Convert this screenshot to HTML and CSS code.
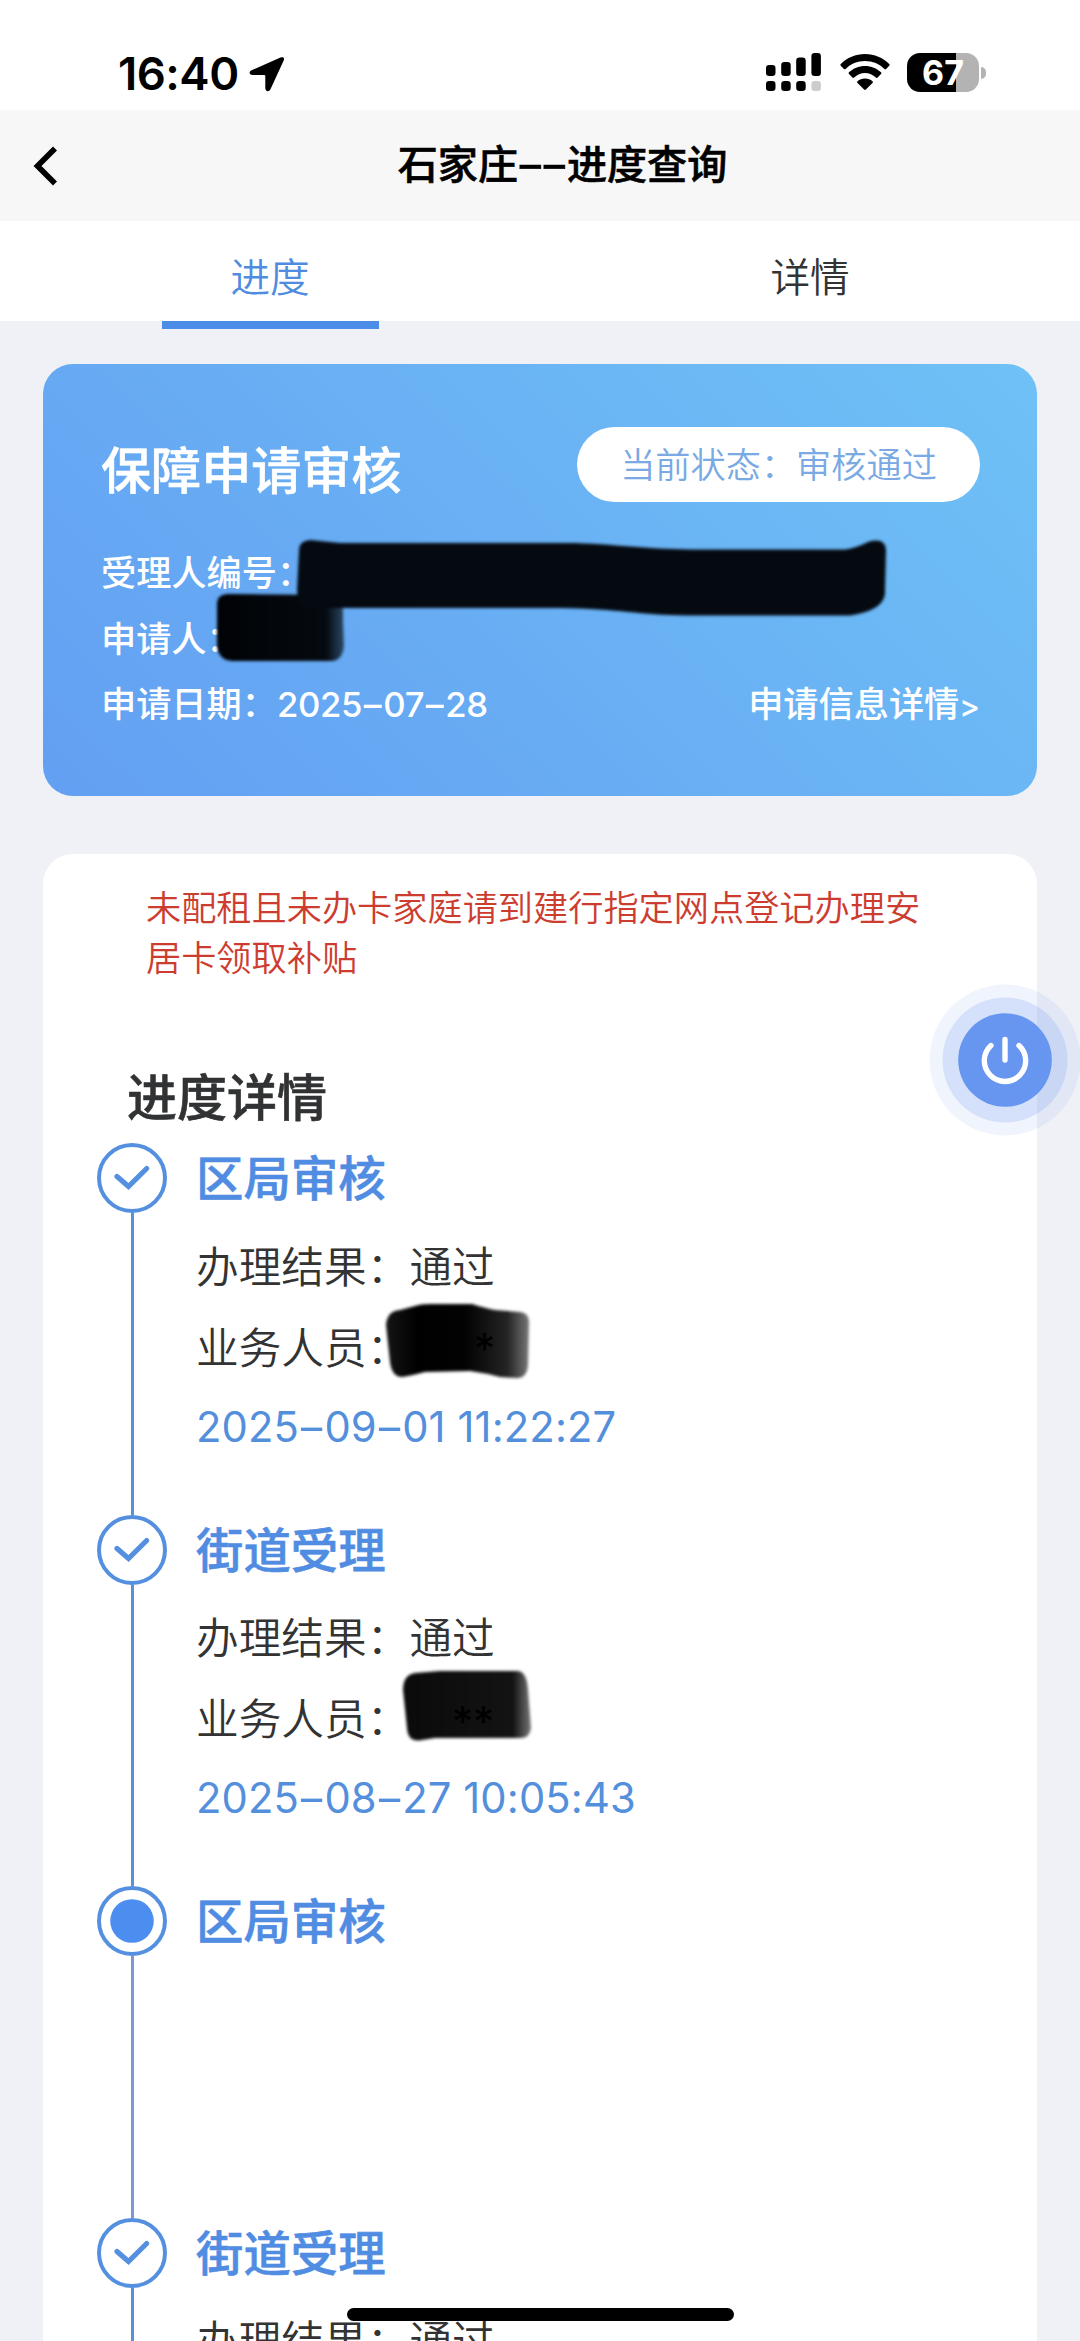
FILE: index.html
```html
<!DOCTYPE html>
<html lang="zh-CN">
<head>
<meta charset="utf-8">
<title>石家庄--进度查询</title>
<link rel="stylesheet" href="styles.css">
</head>
<body>
<div class="screen">
  <header class="status">
    <div class="status-left">
      <span class="time">16:40</span>
      <svg class="location" width="36" height="36" viewBox="0 0 36 36"><path d="M31.500 1.600 2.600 14.200C-.5 15.800 0 18.900 3.600 19H15.200Q16.300 19 16.300 20V32.200C16.600 36 20 36.200 21.600 33L34.800 4.200C35.800 1.600 34 .4 31.500 1.600Z"/></svg>
    </div>
    <div class="status-right">
      <svg width="56" height="38" viewBox="0 0 56 38">
        <rect x="0" y="12" width="9.500" height="11" rx="3.200"/><rect x="15.200" y="9" width="9.500" height="14" rx="3.200"/><rect x="30.200" y="4.500" width="9.500" height="18.500" rx="3.200"/><rect x="45.400" y="0" width="9.500" height="23" rx="3.200"/>
        <rect x="0" y="28" width="9.500" height="10" rx="3.200"/><rect x="15.200" y="28" width="9.500" height="10" rx="3.200"/><rect x="30.200" y="28" width="9.500" height="10" rx="3.200"/><rect x="45.400" y="28" width="9.500" height="10" rx="3.200" fill="#ccc"/>
      </svg>
      <svg class="wifi" width="50" height="38" viewBox="0 0 50 38"><path d="M25 1C15.500 1 7 4.800.8 11c-.6.600-.6 1.200 0 1.800l3.100 3.100c.5.500 1.100.5 1.700 0C10.600 11 17.400 8 25 8s14.400 3 19.400 7.900c.6.500 1.200.5 1.700 0l3.100-3.100c.6-.6.600-1.200 0-1.800C43 4.800 34.500 1 25 1Z"/><path d="M25 13c-6.200 0-11.800 2.400-16 6.300-.6.600-.6 1.200 0 1.800l3.400 3.400c.5.500 1.100.5 1.700 0C17 21.800 20.800 20 25 20s8 1.800 10.900 4.500c.6.500 1.200.5 1.700 0L41 21.100c.6-.6.600-1.200 0-1.800C36.800 15.400 31.200 13 25 13Z"/><path d="M25 25.400c-2.900 0-5.500 1-7.500 2.800-.6.500-.6 1.100 0 1.700l6.600 6.700c.6.600 1.200.6 1.800 0l6.600-6.700c.6-.6.600-1.200 0-1.700-2-1.800-4.600-2.800-7.500-2.800Z"/></svg>
      <div class="battery"><div class="battery-body">67</div><div class="battery-tip"></div></div>
    </div>
  </header>

  <nav class="nav">
    <svg class="back" width="26" height="40" viewBox="0 0 26 40"><path d="M23 2.500 5.500 20 23 37.500" fill="none" stroke="#000" stroke-width="5.600"/></svg>
    <h1 class="nav-title">石家庄<span class="dash">-</span><span class="dash">-</span>进度查询</h1>
  </nav>

  <div class="tabs">
    <div class="tab tab-active">进度</div>
    <div class="tab">详情</div>
  </div>

  <main class="content">
    <section class="card">
      <div class="card-head">
        <h2 class="card-title">保障申请审核</h2>
        <div class="pill">当前状态：审核通过</div>
      </div>
      <div class="row">受理人编号：</div>
      <div class="row">申请人：</div>
      <div class="row">
        <span>申请日期：<span class="num">2025<span class="dash">-</span>07<span class="dash">-</span>28</span></span>
        <span class="more">申请信息详情<span class="gt">&gt;</span></span>
      </div>
    </section>

    <section class="panel">
      <p class="notice">未配租且未办卡家庭请到建行指定网点登记办理安居卡领取补贴</p>
      <h2 class="panel-title">进度详情</h2>
      <ol class="steps">
        <li class="step">
          <div class="rail">
            <svg width="70" height="70" viewBox="0 0 70 70"><circle class="ring" cx="35" cy="35" r="33"/><path class="tick" d="m20 33.500 11.500 10L49.700 25.500"/></svg>
            <div class="line"></div>
          </div>
          <div class="body">
            <h3>区局审核</h3>
            <p>办理结果：通过</p>
            <p>业务人员：</p>
            <time>2025<span class="dash">-</span>09<span class="dash">-</span>01 11:22:27</time>
          </div>
        </li>
        <li class="step">
          <div class="rail">
            <svg width="70" height="70" viewBox="0 0 70 70"><circle class="ring" cx="35" cy="35" r="33"/><path class="tick" d="m20 33.500 11.500 10L49.700 25.500"/></svg>
            <div class="line"></div>
          </div>
          <div class="body">
            <h3>街道受理</h3>
            <p>办理结果：通过</p>
            <p>业务人员：</p>
            <time>2025<span class="dash">-</span>08<span class="dash">-</span>27 10:05:43</time>
          </div>
        </li>
        <li class="step step-current">
          <div class="rail">
            <svg width="70" height="70" viewBox="0 0 70 70"><circle class="ring" cx="35" cy="35" r="33"/><circle class="dot" cx="35" cy="35" r="21.800"/></svg>
            <div class="line"></div>
          </div>
          <div class="body"><h3>区局审核</h3></div>
        </li>
        <li class="step">
          <div class="rail">
            <svg width="70" height="70" viewBox="0 0 70 70"><circle class="ring" cx="35" cy="35" r="33"/><path class="tick" d="m20 33.500 11.500 10L49.700 25.500"/></svg>
            <div class="line"></div>
          </div>
          <div class="body">
            <h3>街道受理</h3>
            <p>办理结果：通过</p>
          </div>
        </li>
      </ol>
    </section>
  </main>

  <svg class="marks" width="1080" height="2341" viewBox="0 0 1080 2341">
    <defs>
      <linearGradient id="fadeA"><stop offset="0" stop-color="#151515"/><stop offset=".22" stop-color="#000"/><stop offset=".55" stop-color="#020202"/><stop offset=".85" stop-color="#242424"/><stop offset="1" stop-color="#777"/></linearGradient>
      <linearGradient id="fadeB"><stop offset="0" stop-color="#0a0a0a"/><stop offset=".86" stop-color="#131313"/><stop offset="1" stop-color="#777"/></linearGradient>
      <linearGradient id="fadeC"><stop offset="0" stop-color="#000205"/><stop offset=".86" stop-color="#050a10"/><stop offset="1" stop-color="#2a4866"/></linearGradient>
    </defs>
    <path fill="url(#fadeC)" d="M217 603Q217 595 227 594L335 595Q344 597 343 620L344 645Q343 660 332 661L232 661Q218 660 217 645Z"/>
    <path fill="#050a11" d="M299 550Q299 541 310 540L340 543 575 543C625 545 650 549.500 700 549.500L845 549.500Q856 548 868 542 885 537 886 550L885 590Q887 610 850 615.500L685 615.500C640 615 620 609 560 608L345 608Q318 608 305 606 297 602 297 590Z"/>
    <path fill="url(#fadeA)" d="M386 1325Q387 1311 400 1310L415 1306Q420 1304 430 1304L472 1304Q485 1308 495 1310L520 1312Q529 1313 529 1322L528 1365Q527 1378 517 1378L500 1377Q485 1373 470 1371L425 1372Q410 1376 402 1377 392 1377 390 1362Z"/>
    <path fill="url(#fadeB)" d="M403 1690Q403 1675 415 1673L440 1671 518 1671Q527 1672 528 1690L531 1728Q530 1738 520 1738L435 1738 422 1740Q408 1743 407 1728Z"/>
  </svg>
  <svg class="masked" width="1080" height="2341" viewBox="0 0 1080 2341"><text x="474" y="1364">*</text><text x="452" y="1737">**</text></svg>

  <svg class="power" width="152" height="152" viewBox="0 0 152 152">
    <circle cx="76" cy="76" r="75.500" fill="#6796f0" fill-opacity=".1"/>
    <circle cx="76" cy="76" r="62.500" fill="#6796f0" fill-opacity=".2"/>
    <circle cx="76" cy="76" r="46.800" fill="#6796f0"/>
    <path d="M62 61.500A20.700 20.700 0 1 0 90 61.500M76 55.500V76" fill="none" stroke="#fff" stroke-width="5.400" stroke-linecap="round"/>
  </svg>
  <div class="home-bar"></div>
</div>
</body>
</html>
```
FILE: styles.css
```css
* { box-sizing: border-box; margin: 0; padding: 0; }

body { font-family: Inter, "Noto Sans CJK SC", sans-serif; color: #333; }

.screen {
  position: relative;
  width: 1080px;
  height: 2341px;
  overflow: hidden;
  background: #eff1f6;
}

.dash { display: inline-block; width: .61em; text-align: center; transform: scaleX(1.6); }

/* Status bar */
.status {
  display: flex;
  justify-content: space-between;
  height: 110px;
  padding: 53px 94px 0 118px;
  background: #fff;
}
.status-left, .status-right { display: flex; align-items: flex-start; }
.time { width: 131px; color: #000; font-size: 45.500px; font-weight: 600; line-height: 42px; letter-spacing: -.5px; }
.location { margin-top: 3px; }
.wifi { margin-left: 18px; }
.battery { display: flex; align-items: center; gap: 2px; margin-left: 17px; }
.battery-body {
  width: 72px;
  height: 39px;
  border-radius: 13px;
  background: linear-gradient(90deg, #000 67.500%, #b3b3b3 67.500%);
  color: #fff;
  font-size: 34px;
  font-weight: 650;
  line-height: 40px;
  text-align: center;
}
.battery-tip { width: 5px; height: 12px; border-radius: 0 5px 5px 0; background: #b3b3b3; }

/* Navigation */
.nav { display: flex; align-items: center; height: 111px; padding-left: 32px; background: #f7f7f7; }
.nav-title {
  flex: 1;
  padding: 0 37px 1px 24px;
  color: #000;
  font-size: 40.100px;
  font-weight: 500;
  line-height: 60px;
  text-align: center;
  -webkit-text-stroke: .6px;
}

/* Tabs */
.tabs { display: flex; height: 100px; background: #fff; }
.tab {
  flex: 1;
  display: flex;
  flex-direction: column;
  align-items: center;
  height: 108px;
  padding-top: 27px;
  font-size: 39.600px;
  font-weight: 350;
  line-height: 60px;
}
.tab-active { color: #4f8cdf; }
.tab-active::after { content: ""; width: 217px; height: 8px; margin-top: 13px; background: #4c8de8; }

.content { padding: 43px 43px 0; }

/* Application card */
.card {
  height: 432px;
  padding: 63px 57px 0 58px;
  border-radius: 30px;
  background: linear-gradient(45deg, #639ff2, #6fc1f6);
  color: #fff;
}
.card-head { display: flex; justify-content: space-between; height: 114px; }
.card-title {
  padding-top: 8px;
  font-size: 50.100px;
  font-weight: 500;
  line-height: 72px;
  -webkit-text-stroke: .6px;
}
.pill {
  width: 403px;
  height: 75px;
  border-radius: 38px;
  background: #fff;
  color: #7aa9e4;
  font-size: 35.200px;
  font-weight: 350;
  line-height: 76px;
  text-align: center;
}
.row {
  display: flex;
  justify-content: space-between;
  height: 65.500px;
  font-size: 35.200px;
  font-weight: 500;
  line-height: 65px;
}
.num { font-weight: 450; font-size: 34.700px; letter-spacing: -.35px; }
.gt { font-weight: 500; font-size: 31px; }

/* Progress panel */
.panel { height: 1600px; margin-top: 58px; padding-top: 28.500px; border-radius: 30px; background: #fff; }
.notice {
  width: 780px;
  margin-left: 103px;
  color: #cd3d2f;
  font-size: 35.200px;
  font-weight: 350;
  line-height: 50.200px;
}
.panel-title {
  margin: 79.500px 0 8.600px 84px;
  color: #303233;
  font-size: 50px;
  font-weight: 500;
  line-height: 72px;
  -webkit-text-stroke: .6px;
}
.steps { padding-left: 54px; list-style: none; }
.step { display: flex; height: 371.700px; }
.step-current { height: 331.500px; }
.rail { display: flex; flex-direction: column; align-items: center; width: 70px; }
.rail svg { flex: none; }
.ring { fill: none; stroke: #5590e0; stroke-width: 4; }
.tick { fill: none; stroke: #5590e0; stroke-width: 5.200; stroke-linecap: round; }
.dot { fill: #4c8df0; }
.line { flex: 1; width: 3px; background: #5a90d8; }
.step-current .line { background: #7c97d2; }
.body { padding-left: 29px; }
.body h3 {
  height: 91.500px;
  padding-top: 2px;
  color: #4f8ce2;
  font-size: 47.400px;
  font-weight: 500;
  line-height: 68px;
  -webkit-text-stroke: .6px;
}
.body p { height: 81px; font-size: 42.700px; font-weight: 350; line-height: 65px; }
.body time {
  display: block;
  color: #548fdc;
  font-size: 41.700px;
  font-weight: 380;
  line-height: 61px;
  letter-spacing: .12px;
  white-space: nowrap;
}

/* Overlays */
.marks { position: absolute; inset: 0; filter: blur(1.600px); }
.masked { position: absolute; inset: 0; font-size: 42px; fill: #000; }
.power { position: absolute; left: 928.500px; top: 984px; }
.home-bar {
  position: absolute;
  left: 347px;
  bottom: 20px;
  width: 387px;
  height: 13px;
  border-radius: 7px;
  background: #000;
}
```
